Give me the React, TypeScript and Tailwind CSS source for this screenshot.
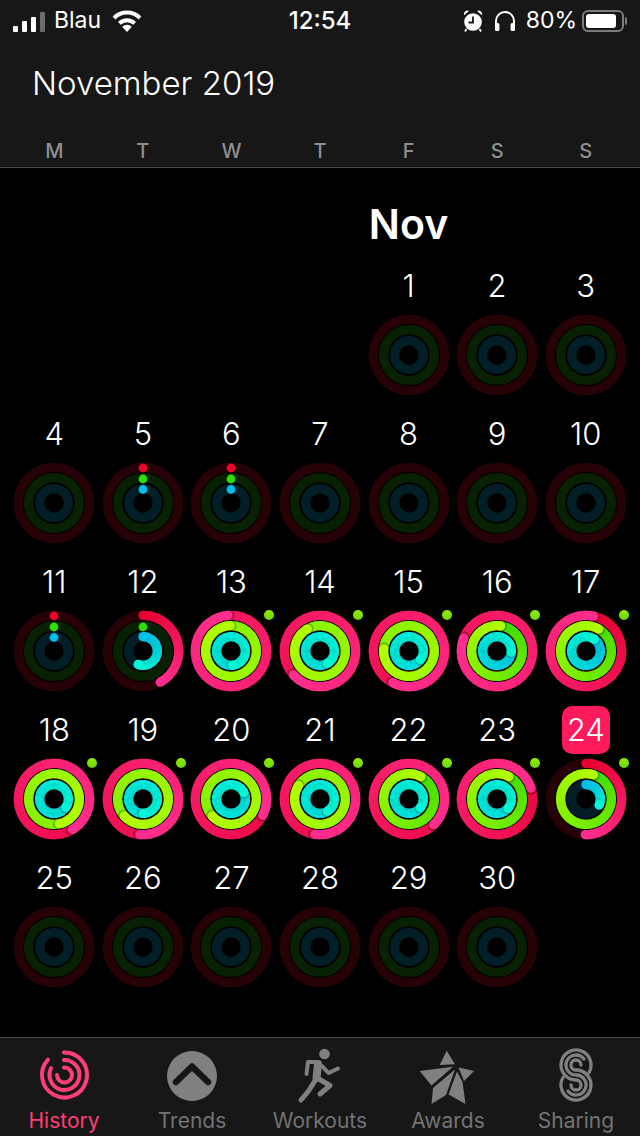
type RingValues = [number, number, number];

// head angle of each ring in degrees, clockwise from the top. above 360 means the ring has lapped
const days: Record<number, RingValues> = {
  5: [0, 0, 0],
  6: [0, 0, 0],
  11: [0, 0, 0],
  12: [151, 0, 200],
  13: [715, 1078, 895],
  14: [588, 1050, 871],
  15: [567, 995, 848],
  16: [651, 368, 455],
  17: [372, 390, 396],
  18: [509, 888, 845],
  19: [545, 948, 900],
  20: [477, 948, 784],
  21: [548, 1022, 869],
  22: [496, 388, 848],
  23: [432, 388, 851],
  24: [181, 377, 115],
};

const ringStyles = [
  { r: 35.65, dotR: 35, from: [230, 0, 47], to: [255, 46, 142], track: "#260206", dot: "#f0002c" },
  { r: 25.35, dotR: 24, from: [61, 220, 0], to: [178, 255, 0], track: "#092103", dot: "#30dd00" },
  { r: 14.35, dotR: 13.5, from: [0, 191, 233], to: [0, 248, 214], track: "#021e27", dot: "#00bdea" },
];

const CENTER = 41;
const STROKE = 9.3;

function point(r: number, deg: number) {
  const a = ((deg - 90) * Math.PI) / 180;
  return { x: CENTER + r * Math.cos(a), y: CENTER + r * Math.sin(a) };
}

function mix(a: number[], b: number[], t: number) {
  const c = a.map((v, i) => Math.round(v + (b[i] - v) * t));
  return `rgb(${c[0]},${c[1]},${c[2]})`;
}

function Ring({ value, index }: { value: number; index: number }) {
  const s = ringStyles[index];
  const track = <circle cx={CENTER} cy={CENTER} r={s.r} fill="none" stroke={s.track} strokeWidth={STROKE} />;
  if (value === 0) {
    const top = point(s.dotR, 0);
    return (
      <g>
        {track}
        <circle cx={top.x} cy={top.y} r={4.4} fill={s.dot} />
      </g>
    );
  }

  // only the last lap shows, and the gradient runs over the whole sweep
  const sweep = Math.min(value, 360);
  const head = value;
  const tail = head - sweep;
  const startT = (value - sweep) / value;
  const step = 4;
  const count = Math.ceil(sweep / step);
  const parts = [];
  for (let i = 0; i < count; i++) {
    const d0 = tail + (i * sweep) / count;
    const d1 = tail + ((i + 1) * sweep) / count + (i === count - 1 ? 0 : 1.5);
    const p0 = point(s.r, d0);
    const p1 = point(s.r, d1);
    const t = startT + ((1 - startT) * (i + 0.5)) / count;
    parts.push(
      <path
        key={i}
        d={`M${p0.x} ${p0.y}A${s.r} ${s.r} 0 0 1 ${p1.x} ${p1.y}`}
        fill="none"
        stroke={mix(s.from, s.to, t)}
        strokeWidth={STROKE}
      />,
    );
  }
  const start = point(s.r, tail);
  const end = point(s.r, head);
  const shade = point(s.r, head + 3);
  const split = Math.max(count - 8, 0);
  return (
    <g>
      {track}
      {value < 360 && <circle cx={start.x} cy={start.y} r={STROKE / 2} fill={mix(s.from, s.from, 0)} />}
      {parts.slice(0, split)}
      {value >= 360 && <circle cx={shade.x} cy={shade.y} r={STROKE / 2 + 0.5} fill="#000" opacity={0.25} />}
      {parts.slice(split)}
      <circle cx={end.x} cy={end.y} r={STROKE / 2} fill={mix(s.from, s.to, 1)} />
    </g>
  );
}

function Rings({ values }: { values?: RingValues }) {
  return (
    <svg width="82" height="82" viewBox="0 0 82 82">
      {ringStyles.map((s, i) =>
        values ? (
          <Ring key={i} value={values[i]} index={i} />
        ) : (
          <circle key={i} cx={CENTER} cy={CENTER} r={s.r} fill="none" stroke={s.track} strokeWidth={STROKE} />
        ),
      )}
    </svg>
  );
}

function DayCell({ day }: { day: number }) {
  const values = days[day];
  const closed = day >= 13 && day <= 24;
  return (
    <div className="flex h-[148px] flex-col items-center">
      <div
        className={`flex h-12 w-12 items-center justify-center rounded-[10px] pb-0.5 text-[31px] font-light leading-none text-white ${
          day === 24 ? "bg-[#ff1a5b]" : ""
        }`}
      >
        {day}
      </div>
      <div className="relative mt-1 h-[82px] w-[82px]">
        <Rings values={values} />
        {closed && (
          <div className="absolute right-[-2px] top-0 h-2.5 w-2.5 rounded-full bg-gradient-to-b from-[#8fee00] to-[#6fd800]" />
        )}
      </div>
    </div>
  );
}

function WifiIcon() {
  return (
    <svg width="30" height="22" viewBox="0 0 30 22" className="ml-[11px]">
      <path d="M15 22 L10.2 16.8 A6.8 6.8 0 0 1 19.8 16.8 Z" fill="#fff" />
      <path d="M7.4 13.4 A10.8 10.8 0 0 1 22.6 13.4" fill="none" stroke="#fff" strokeWidth="4" />
      <path d="M2 8 A18.4 18.4 0 0 1 28 8" fill="none" stroke="#fff" strokeWidth="4" />
    </svg>
  );
}

function AlarmIcon() {
  return (
    <svg width="20" height="24" viewBox="0 0 20 24">
      <circle cx="10" cy="13" r="8.8" fill="#fff" />
      <path d="M10 7.5 V13.5 H5.5" fill="none" stroke="#171717" strokeWidth="1.8" />
      <path d="M1 6.2 A3.5 3.5 0 0 1 6 2 Z M19 6.2 A3.5 3.5 0 0 0 14 2 Z" fill="#fff" />
      <path d="M3.5 20 L2 22.5 M16.5 20 L18 22.5" stroke="#fff" strokeWidth="1.8" />
    </svg>
  );
}

function HeadphonesIcon() {
  return (
    <svg width="22" height="22" viewBox="0 0 22 22" className="ml-[11px]">
      <path d="M2 15 V11 A9 9 0 0 1 20 11 V15" fill="none" stroke="#fff" strokeWidth="2" />
      <rect x="1" y="13" width="4.4" height="8" rx="1.6" fill="#fff" />
      <rect x="16.6" y="13" width="4.4" height="8" rx="1.6" fill="#fff" />
    </svg>
  );
}

function StatusBar() {
  return (
    <div className="flex h-10 items-center pl-[13px] pr-[13px] pt-[1px] text-[23px] leading-none text-white">
      <div className="flex flex-1 items-center">
        <div className="flex h-[22px] items-end gap-[4px]">
          <div className="h-[6px] w-[5px] rounded-[1px] bg-white" />
          <div className="h-[11px] w-[5px] rounded-[1px] bg-white" />
          <div className="h-[15px] w-[5px] rounded-[1px] bg-white" />
          <div className="h-[20px] w-[5px] rounded-[1px] bg-[#6c6c6c]" />
        </div>
        <span className="ml-[9px]">Blau</span>
        <WifiIcon />
      </div>
      <span className="text-[24px] font-medium">12:54</span>
      <div className="flex flex-1 items-center justify-end">
        <AlarmIcon />
        <HeadphonesIcon />
        <span className="ml-[10px]">80%</span>
        <div className="ml-[5px] flex items-center">
          <div className="h-[22px] w-[42px] rounded-[6px] border-2 border-[#7c7c7c] p-[2px]">
            <div className="h-full w-[30px] rounded-[3px] bg-white" />
          </div>
          <div className="ml-[1px] h-[8px] w-[2px] rounded-r-sm bg-[#7c7c7c]" />
        </div>
      </div>
    </div>
  );
}

function HistoryIcon() {
  return (
    <svg width="70" height="60" viewBox="0 0 70 60">
      <g fill="none" stroke="#ff3e78" strokeWidth="4" strokeLinecap="round">
        <path d="M35 7.5 A22.5 22.5 0 1 1 19 14.7" />
        <path d="M35 15 A15 15 0 1 1 22.1 23.2" />
        <path d="M35 22.5 A7.5 7.5 0 1 1 28 30" />
      </g>
    </svg>
  );
}

function TrendsIcon() {
  return (
    <svg width="70" height="60" viewBox="0 0 70 60">
      <circle cx="35" cy="31" r="25" fill="#808080" />
      <path d="M19 37 L35 21.5 L51 37" fill="none" stroke="#171717" strokeWidth="6.5" strokeLinecap="round" strokeLinejoin="round" />
    </svg>
  );
}

function WorkoutsIcon() {
  return (
    <svg width="70" height="60" viewBox="0 0 70 60">
      <circle cx="39.5" cy="9" r="5.3" fill="#808080" />
      <g fill="none" stroke="#808080" strokeLinecap="round" strokeLinejoin="round">
        <path d="M32 17 L23 17 L21.5 29" strokeWidth="4" />
        <path d="M33 19 L31.5 33" strokeWidth="8" />
        <path d="M37 21 L43.5 28 L53 23.5" strokeWidth="4" />
        <path d="M30.5 35 L23.5 46 L16 55" strokeWidth="5" />
        <path d="M33 33.5 L45 40.5 L35 49" strokeWidth="5" />
      </g>
    </svg>
  );
}

function AwardsIcon() {
  return (
    <svg width="70" height="60" viewBox="0 0 70 60">
      <g fill="#808080">
        <polygon points="33.7,5.7 42,19.3 26.7,20" />
        <polygon points="6.7,26 40,21.7 18.5,40.5" />
        <polygon points="20,43 42,24.5 33,50 18.5,59" />
        <polygon points="44,26.5 35.5,49.5 52.5,59 49.5,37" />
        <polygon points="45.5,22.5 61,26 51,36" />
      </g>
    </svg>
  );
}

function SharingIcon() {
  return (
    <svg width="70" height="60" viewBox="0 0 70 60">
      <g fill="none" stroke="#808080" strokeWidth="3.3" strokeLinecap="round">
        <path d="M48 27.5 A15 15 0 1 0 35 35 A5 5 0 1 1 30 40" />
        <path d="M43 14 A10 10 0 1 0 35 30 A10 10 0 1 1 27 46" />
        <path d="M48 27.5 A15 15 0 1 0 35 35 A5 5 0 1 1 30 40" transform="rotate(180 35 30)" />
      </g>
    </svg>
  );
}

const tabs = [
  { label: "History", icon: <HistoryIcon /> },
  { label: "Trends", icon: <TrendsIcon /> },
  { label: "Workouts", icon: <WorkoutsIcon /> },
  { label: "Awards", icon: <AwardsIcon /> },
  { label: "Sharing", icon: <SharingIcon /> },
];

export default function App() {
  const weekdays = ["M", "T", "W", "T", "F", "S", "S"];
  const cells = Array.from({ length: 30 }, (_, i) => i + 1);
  return (
    <div className="flex h-[1136px] w-[640px] flex-col overflow-hidden bg-black font-['Inter',sans-serif]">
      <header className="h-[168px] shrink-0 border-b border-[#4a4a4a] bg-[#171717]">
        <StatusBar />
        <h1 className="mt-5 flex h-12 items-center pl-8 text-[33px] font-light text-white">November 2019</h1>
        <div className="mt-[27px] grid grid-cols-7 px-2.5">
          {weekdays.map((d, i) => (
            <div key={i} className="flex h-8 items-center justify-center text-[20px] font-medium text-[#8e8e93]">
              {d}
            </div>
          ))}
        </div>
      </header>

      <main className="flex-1 bg-black">
        <div className="grid grid-cols-7 px-2.5">
          <div className="col-start-5 flex h-[94px] items-center justify-center pt-[20px] text-[41px] font-semibold text-white">
            Nov
          </div>
        </div>
        <div className="grid grid-cols-7 px-2.5">
          {cells.map((day) => (
            <div key={day} className={day === 1 ? "col-start-5" : ""}>
              <DayCell day={day} />
            </div>
          ))}
        </div>
      </main>

      <nav className="grid h-[99px] shrink-0 grid-cols-5 border-t border-[#4a4a4a] bg-[#171717] pt-[7px]">
        {tabs.map((t, i) => (
          <div key={t.label} className="flex flex-col items-center">
            {t.icon}
            <span className={`mt-1 text-[21px] leading-6 ${i === 0 ? "text-[#ff3e78]" : "text-[#737373]"}`}>
              {t.label}
            </span>
          </div>
        ))}
      </nav>
    </div>
  );
}
